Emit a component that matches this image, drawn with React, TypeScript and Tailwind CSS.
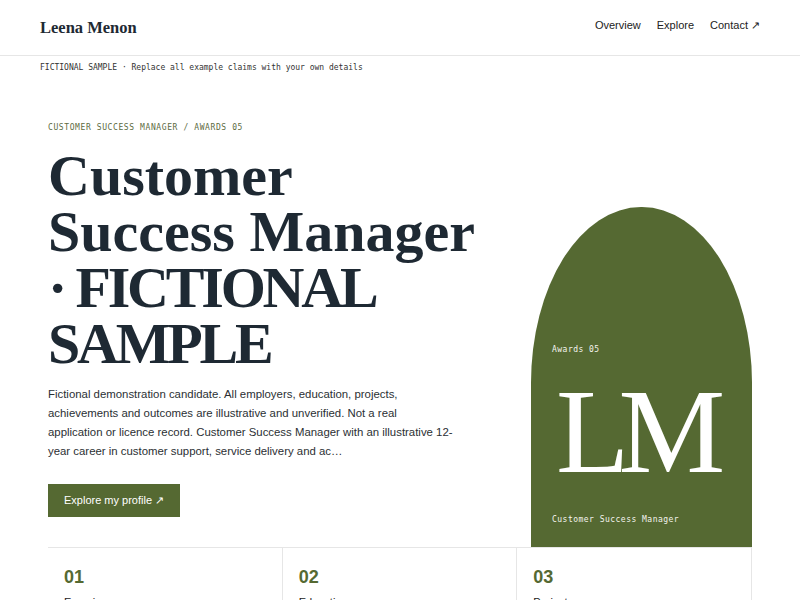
export default function App() {
  return (
    <div className="min-h-screen bg-white text-[#1e2933]">
      <header className="h-[56px] border-b border-[#e6e6e6] px-10 flex items-center justify-between">
        <div className="font-['Liberation_Serif',serif] font-bold text-[16.5px] text-[#1e2933] leading-none pt-[1px]">
          Leena Menon
        </div>
        <nav className="flex items-center gap-4 mb-[4px] font-['Liberation_Sans',sans-serif] text-[11px] text-[#222]">
          <span>Overview</span>
          <span>Explore</span>
          <span>Contact ↗</span>
        </nav>
      </header>
      <div className="h-[24px] px-10 flex items-center font-['DejaVu_Sans_Mono',monospace] text-[8px] text-[#333]">
        FICTIONAL SAMPLE · Replace all example claims with your own details
      </div>
      <section className="px-12 pt-[42px] grid grid-cols-[1fr_221px] items-end">
        <div className="pb-[30px]">
          <div className="font-['DejaVu_Sans_Mono',monospace] text-[8px] leading-[12px] tracking-[0.075em] text-[#5d6b3f] mb-[14px]">
            CUSTOMER SUCCESS MANAGER / AWARDS 05
          </div>
          <h1 className="font-['Liberation_Serif',serif] font-bold text-[58px] leading-[56px] text-[#1e2933] max-w-[440px]">
            Customer Success Manager <span className="tracking-[-0.055em]">· FICTIONAL SAMPLE</span>
          </h1>
          <p className="mt-[13px] max-w-[405px] font-['Liberation_Sans',sans-serif] text-[11.4px] leading-[19px] text-[#2b2f33]">
            Fictional demonstration candidate. All employers, education, projects, achievements and outcomes are illustrative and unverified. Not a real application or licence record. Customer Success Manager with an illustrative 12-year career in customer support, service delivery and ac…
          </p>
          <button className="mt-[23px] h-[33px] px-4 bg-[#556932] text-white font-['Liberation_Sans',sans-serif] text-[11px] flex items-center">
            Explore my profile ↗
          </button>
        </div>
        <div className="h-[340px] bg-[#556932] rounded-t-[110px_176px] flex flex-col justify-end px-[21px] pb-[21px] text-[#f4f4ee]">
          <div className="font-['DejaVu_Sans_Mono',monospace] text-[8px] leading-[12px] tracking-[0.06em]">
            Awards 05
          </div>
          <div className="mt-[16px] pl-[4px] font-['Liberation_Serif',serif] text-[120px] leading-[120px] tracking-[-0.09em] text-white">
            LM
          </div>
          <div className="mt-[22px] font-['DejaVu_Sans_Mono',monospace] text-[8px] leading-[12px] tracking-[0.06em]">
            Customer Success Manager
          </div>
        </div>
      </section>
      <div className="mx-12 grid grid-cols-3 border-t border-[#e6e6e6] font-['Liberation_Sans',sans-serif]">
        {[
          ["01", "Experience", "Illustrative roles and outcomes"],
          ["02", "Education", "Illustrative study and training"],
          ["03", "Projects", "Illustrative programmes delivered"],
        ].map(([n, label, desc]) => (
          <div key={n} className="border-r border-[#e6e6e6] px-4 pt-[19px] pb-6">
            <div className="text-[18px] leading-[20px] font-bold text-[#556932]">{n}</div>
            <div className="mt-[8px] text-[11px] leading-[14px] text-[#222]">{label}</div>
            <div className="mt-1 text-[11px] leading-[16px] text-[#555]">{desc}</div>
          </div>
        ))}
      </div>
    </div>
  );
}
